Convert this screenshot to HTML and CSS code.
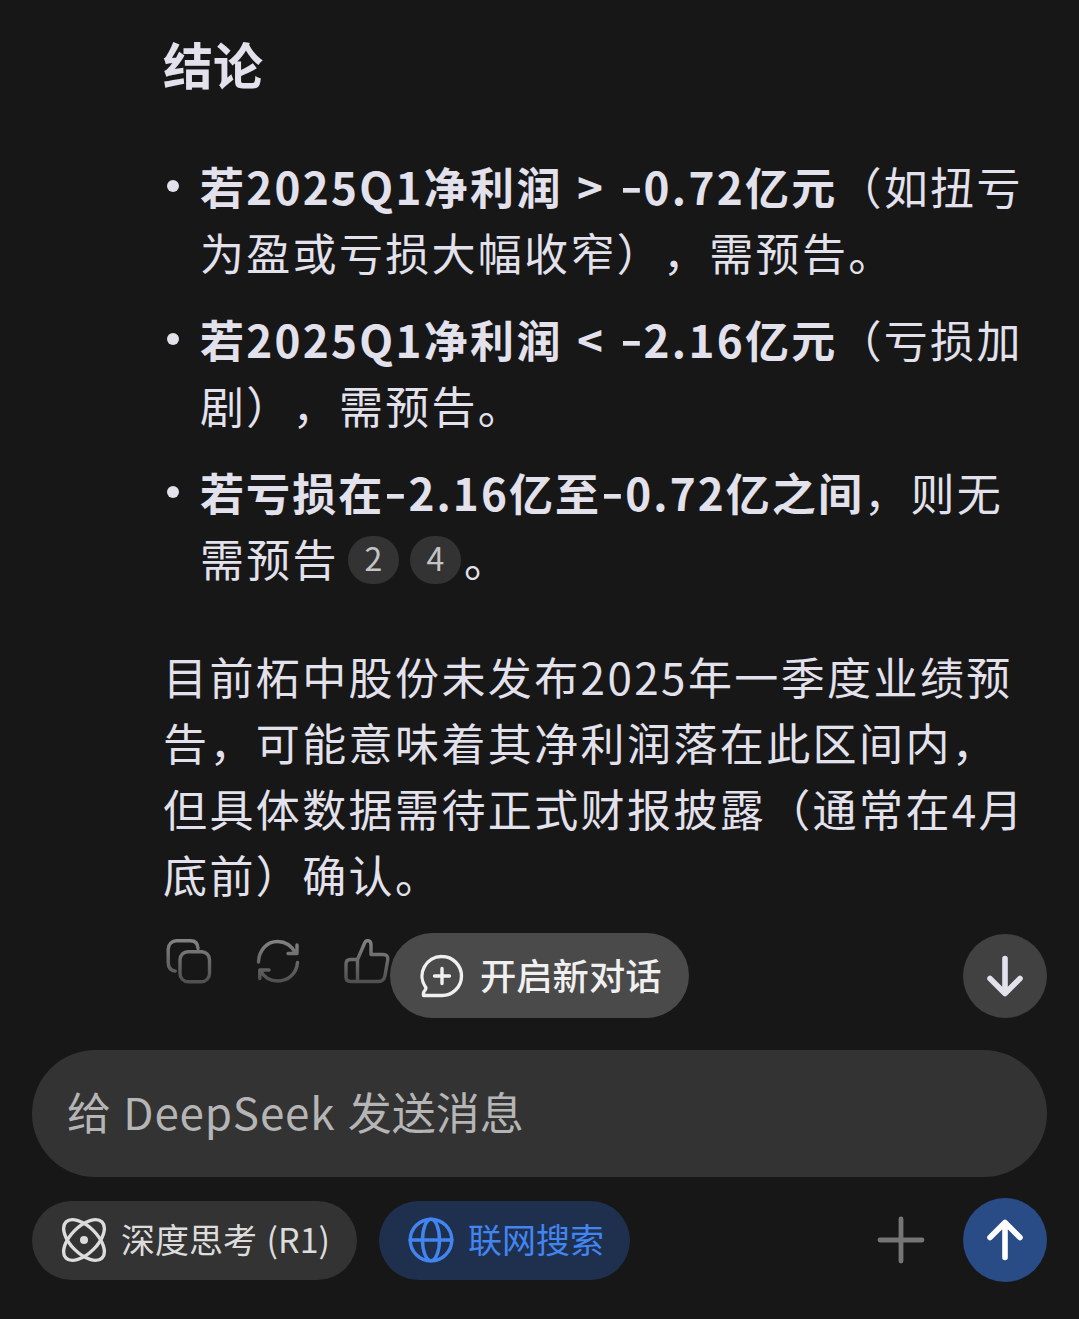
FILE: index.html
```html
<!DOCTYPE html>
<html lang="zh-CN">
<head>
  <meta charset="UTF-8">
  <meta name="viewport" content="width=device-width, initial-scale=1.0">
  <title>DeepSeek</title>
  <link rel="stylesheet" href="styles.css">
</head>
<body>
  <main class="answer">
    <h2>结论</h2>
    <ul class="list">
      <li><strong>若2025Q1净利润 &gt; <span class="minus">-</span>0.72亿元</strong>（如扭亏<br>为盈或亏损大幅收窄），需预告。</li>
      <li><strong>若2025Q1净利润 &lt; <span class="minus">-</span>2.16亿元</strong>（亏损加<br>剧），需预告。</li>
      <li><strong class="tight">若亏损在<span class="minus">-</span>2.16亿至<span class="minus">-</span>0.72亿之间</strong>，则无<br>需预告<span class="cite">2</span><span class="cite">4</span>。</li>
    </ul>
    <p class="summary">目前柘中股份未发布2025年一季度业绩预<br>告，可能意味着其净利润落在此区间内，<br>但具体数据需待正式财报披露（通常在4月<br>底前）确认。</p>
    <div class="actions">
      <svg width="48" height="48" viewBox="0 0 48 48">
        <defs>
          <linearGradient id="fade" gradientUnits="userSpaceOnUse" x1="0" y1="0" x2="0" y2="48">
            <stop offset="0" stop-color="#858585"/>
            <stop offset="1" stop-color="#4b4b4b"/>
          </linearGradient>
        </defs>
        <rect x="15" y="13.7" width="29.5" height="30" rx="8"/>
        <path d="M33 10.5C32.8 5.5 30 2.7 25.5 2.7H11.5a8.3 8.3 0 0 0-8.3 8.3v13.5c0 5 2.800 8 7 8.600"/>
      </svg>
      <svg width="48" height="48" viewBox="0 0 48 48">
        <path d="M4.500 24C5 12 13 3.500 23.500 3.500c8 0 14 4 18 11.500M43 7v8.500H34M43.500 24.500C42.500 36 34 43 24 43c-8 0-14-3.500-17.500-10.500M5.800 40.500V32H15"/>
      </svg>
      <svg width="48" height="48" viewBox="0 0 48 48">
        <path d="M14.500 21.500 21 6.500c1.500-5.500 7-5 7 .5v9.500h12c3.500 0 5.300 2 4.700 5.500l-2.700 15.500c-.7 4-2.500 6-6.500 6H7.500c-3 0-4.500-1.500-4.500-4.500V26c0-3 1.500-4.500 4.500-4.500h7v22"/>
      </svg>
      <button class="new-chat">
        <svg width="44" height="44" viewBox="0 0 44 44">
          <path d="M22 2.500a19.500 19.500 0 0 1 0 39H3.500v-2.500c0-2 3-3 2.300-5.500A19.500 19.500 0 0 1 22 2.500zM22 14.500v15M14.500 22h15"/>
        </svg>
        <span>开启新对话</span>
      </button>
      <button class="round scroll-down">
        <svg width="44" height="44" viewBox="0 0 44 44"><path d="M22 4.500V39M7 24.500l15 15 15-15"/></svg>
      </button>
    </div>
  </main>
  <footer class="composer">
    <div class="input">给 <span class="brand">DeepSeek</span> 发送消息</div>
    <div class="tools">
      <button class="chip think">
        <svg width="46" height="46" viewBox="0 0 46 46">
          <ellipse cx="23" cy="23" rx="25.500" ry="13.300" transform="rotate(45 23 23)"/>
          <ellipse cx="23" cy="23" rx="25.500" ry="13.300" transform="rotate(-45 23 23)"/>
          <circle class="dot" cx="23" cy="23" r="4"/>
        </svg>
        <span>深度思考 (R1)</span>
      </button>
      <button class="chip search">
        <svg width="46" height="46" viewBox="0 0 46 46">
          <circle cx="23" cy="23" r="20.800"/>
          <ellipse cx="23" cy="23" rx="8.500" ry="20.800"/>
          <path d="M2 23h42"/>
        </svg>
        <span>联网搜索</span>
      </button>
      <svg class="plus" width="48" height="48" viewBox="0 0 48 48"><path d="M24 3v42M3 24h42"/></svg>
      <button class="round send">
        <svg width="44" height="44" viewBox="0 0 44 44"><path d="M22 39.500V4.500M7 19.500l15-15 15 15"/></svg>
      </button>
    </div>
  </footer>
</body>
</html>
```

FILE: styles.css
```css
* {
  box-sizing: border-box;
}
body {
  margin: 0;
  height: 1319px;
  overflow: hidden;
  background: #171717;
  color: #e2e1ec;
  font-family: "Noto Sans CJK SC", sans-serif;
  text-spacing-trim: space-all;
}
button {
  border: 0;
  padding: 0;
  color: inherit;
  font-family: inherit;
}
svg {
  display: block;
  flex: none;
  fill: none;
  stroke: currentColor;
  stroke-width: 3.4;
  stroke-linecap: round;
  stroke-linejoin: round;
}
.answer {
  height: 1050px;
  padding: 27px 0 0 163px;
  white-space: nowrap;
}
h2 {
  margin: 0;
  font-size: 50px;
  line-height: 72px;
  font-weight: 700;
}
.list {
  list-style: none;
  margin: 54px 0 0;
  padding: 0;
  font-size: 44px;
  line-height: 66px;
  letter-spacing: 2.3px;
}
.list li {
  height: 132px;
  padding-left: 37px;
  margin-bottom: 21px;
  position: relative;
}
.list li::before {
  content: "";
  position: absolute;
  left: 4px;
  top: 27px;
  width: 12px;
  height: 12px;
  border-radius: 50%;
  background: #e2e1ec;
}
.list strong {
  word-spacing: 2px;
}
.list .tight {
  letter-spacing: 2.1px;
}
.minus {
  display: inline-block;
  width: 24px;
  transform: translateY(-2px) scaleX(1.4);
  transform-origin: 0 50%;
}
.cite {
  display: inline-block;
  width: 51px;
  height: 48px;
  margin-left: 11px;
  border-radius: 24px;
  background: #333;
  color: #c4c4c4;
  font-size: 32px;
  line-height: 43px;
  letter-spacing: 0;
  text-align: center;
  vertical-align: top;
  margin-top: 11px;
}
.cite:first-of-type {
  margin-left: 9px;
}
.cite:last-of-type {
  margin-right: 3px;
}
.summary {
  margin: 52px 0 0;
  font-size: 44px;
  line-height: 66px;
  letter-spacing: 2.4px;
}
.actions {
  position: relative;
  display: flex;
  gap: 41px;
  margin-top: 31px;
  padding-left: 2px;
}
.actions > svg {
  stroke: url(#fade);
}
.new-chat {
  position: absolute;
  left: 227px;
  top: -5px;
  width: 299px;
  height: 85px;
  padding-left: 30px;
  display: flex;
  align-items: center;
  gap: 16px;
  border-radius: 43px;
  background: #4a4a4a;
  color: #f0f0f0;
  font-size: 36.3px;
  font-weight: 500;
}
.new-chat span,
.chip span {
  padding-bottom: 4px;
}
.round {
  width: 84px;
  height: 84px;
  display: flex;
  align-items: center;
  justify-content: center;
  border-radius: 50%;
}
.round svg {
  stroke-width: 5.6;
}
.scroll-down {
  position: absolute;
  left: 800px;
  top: -4px;
  background: #414141;
}
.composer {
  padding: 0 32px;
}
.input {
  height: 127px;
  padding-left: 35px;
  border-radius: 64px;
  background: #333;
  color: #b5b5b5;
  font-size: 44px;
  line-height: 122px;
  word-spacing: 2.5px;
}
.brand {
  letter-spacing: 0.8px;
}
.tools {
  display: flex;
  align-items: center;
  margin-top: 21px;
}
.chip {
  height: 79px;
  padding-left: 29px;
  display: flex;
  align-items: center;
  gap: 14px;
  border-radius: 40px;
  font-size: 34px;
  white-space: nowrap;
}
.think {
  width: 325px;
  margin-right: 22px;
  background: #333;
  color: #dcdcdc;
  word-spacing: 2px;
}
.dot {
  fill: currentColor;
  stroke: none;
}
.search {
  width: 251px;
  background: #1f304e;
  color: #4285f0;
}
.plus {
  margin-left: 247px;
  color: #757575;
  stroke-width: 4.8;
}
.send {
  margin-left: auto;
  background: #294b86;
  color: #fff;
}
```
